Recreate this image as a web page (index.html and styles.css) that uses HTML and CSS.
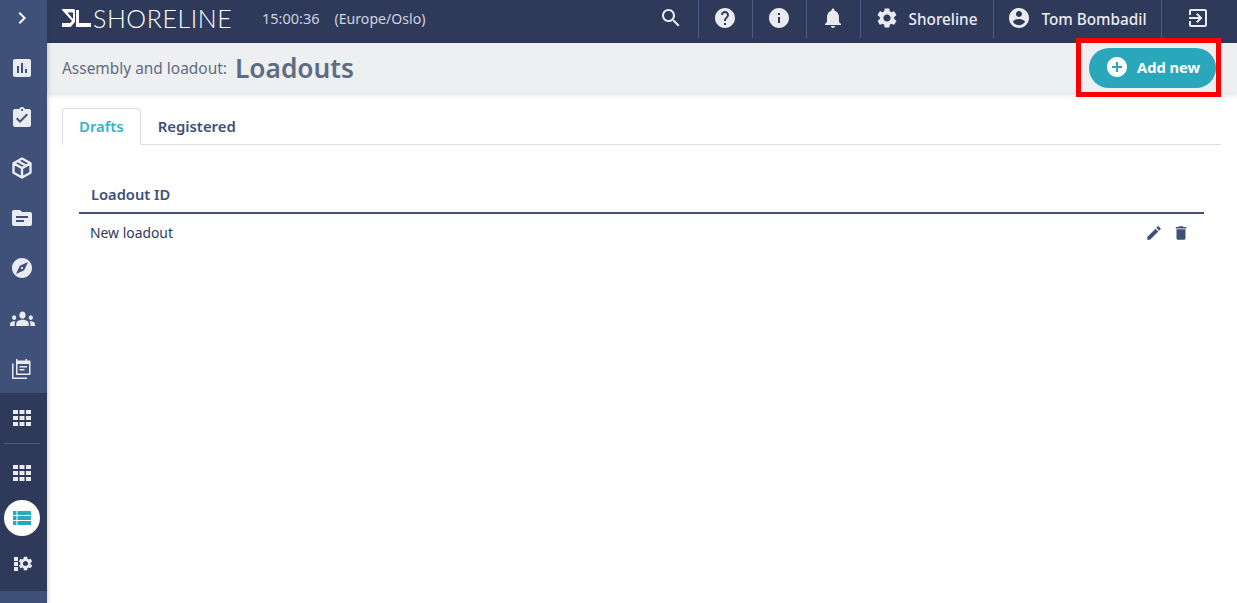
FILE: index.html
```html
<!DOCTYPE html>
<html lang="en">
<head>
    <meta charset="utf-8">
    <meta name="viewport" content="width=device-width, initial-scale=1.0">
    <title>Loadouts</title>
    <link rel="stylesheet" href="styles.css">
</head>
<body>
    <svg class="sprite" aria-hidden="true">
        <symbol id="i-chevron" viewBox="0 0 24 24"><path d="M10 6L8.59 7.41 13.17 12l-4.58 4.59L10 18l6-6z"/></symbol>
        <symbol id="i-chart" viewBox="0 0 24 24"><path d="M19 3H5c-1.1 0-2 .9-2 2v14c0 1.1.9 2 2 2h14c1.1 0 2-.9 2-2V5c0-1.1-.9-2-2-2zM9 17H7v-7h2v7zm4 0h-2V7h2v10zm4 0h-2v-4h2v4z"/></symbol>
        <symbol id="i-task" viewBox="0 0 24 24"><path d="M19 3h-4.18C14.4 1.84 13.3 1 12 1c-1.3 0-2.4.84-2.82 2H5c-1.1 0-2 .9-2 2v14c0 1.1.9 2 2 2h14c1.1 0 2-.9 2-2V5c0-1.1-.9-2-2-2zm-7 0c.55 0 1 .45 1 1s-.45 1-1 1-1-.45-1-1 .45-1 1-1zm-2 14l-4-4 1.41-1.41L10 14.17l6.59-6.59L18 9l-8 8z"/></symbol>
        <symbol id="i-cube" viewBox="0 0 24 24"><path fill="none" stroke="currentColor" stroke-width="2.400" stroke-linejoin="round" d="M12 2.500l8.500 4.800v9.400L12 21.500l-8.500-4.800V7.300zM3.800 7.400l8.200 4.700 8.200-4.700M12 12.100v9.200M7.800 5l8.300 4.800"/></symbol>
        <symbol id="i-folder" viewBox="0 0 24 24"><path d="M20 6h-8l-2-2H4c-1.100 0-1.990.9-1.990 2L2 18c0 1.100.9 2 2 2h16c1.100 0 2-.9 2-2V8c0-1.100-.9-2-2-2zm-6 10H6v-2h8v2zm4-4H6v-2h12v2z"/></symbol>
        <symbol id="i-compass" viewBox="0 0 24 24"><path d="M12 10.900c-.61 0-1.100.49-1.100 1.100s.49 1.100 1.100 1.100c.61 0 1.100-.49 1.100-1.100s-.49-1.100-1.100-1.100zM12 2C6.480 2 2 6.480 2 12s4.480 10 10 10 10-4.480 10-10S17.520 2 12 2zm2.190 12.190L6 18l3.810-8.190L18 6l-3.810 8.190z"/></symbol>
        <symbol id="i-people" viewBox="0 5.500 24 12.500" preserveAspectRatio="none"><path d="M12 12.750c1.630 0 3.070.39 4.240.9 1.080.48 1.760 1.560 1.760 2.730V18H6v-1.610c0-1.180.68-2.260 1.760-2.730 1.170-.52 2.610-.91 4.240-.91zM4 13c1.100 0 2-.9 2-2s-.9-2-2-2-2 .9-2 2 .9 2 2 2zm1.130 1.100c-.37-.06-.74-.1-1.130-.1-.99 0-1.930.21-2.780.58C.48 14.900 0 15.620 0 16.430V18h4.500v-1.610c0-.83.23-1.610.63-2.290zM20 13c1.100 0 2-.9 2-2s-.9-2-2-2-2 .9-2 2 .9 2 2 2zm4 3.430c0-.81-.48-1.530-1.220-1.850-.85-.37-1.790-.58-2.780-.58-.39 0-.76.04-1.130.1.4.68.63 1.460.63 2.290V18H24v-1.570zM12 6c1.660 0 3 1.340 3 3s-1.340 3-3 3-3-1.340-3-3 1.340-3 3-3z"/></symbol>
        <symbol id="i-log" viewBox="0 0 24 24"><path d="M6 2h1.500v1.500h8V2H17v1.500h2.500c.6 0 1 .4 1 1V17c0 .6-.4 1-1 1H7c-.6 0-1-.4-1-1zm1.500 5v9.500h11.500V7zM9.500 9h7.500v1.500H9.500zm0 3h5v1.500h-5zM2 6.500h1.500V20.500H17V22H3c-.6 0-1-.4-1-1z"/></symbol>
        <symbol id="i-apps" viewBox="0 0 18 16"><path d="M0 0h5v4H0zM6.500 0h5v4h-5zM13 0h5v4h-5zM0 6h5v4H0zM6.500 6h5v4h-5zM13 6h5v4h-5zM0 12h5v4H0zM6.500 12h5v4h-5zM13 12h5v4h-5z"/></symbol>
        <symbol id="i-list" viewBox="0 0 18 14"><path d="M0 0h3.500v4H0zM4.500 0H18v4H4.500zM0 5h3.500v4H0zM4.500 5H18v4H4.500zM0 10h3.500v4H0zM4.500 10H18v4H4.500z"/></symbol>
        <symbol id="i-gear" viewBox="0 0 24 24"><path d="M19.140 12.940c.04-.3.06-.61.06-.94 0-.32-.02-.64-.07-.94l2.030-1.580c.18-.14.23-.41.12-.61l-1.920-3.320c-.12-.22-.37-.29-.59-.22l-2.390.96c-.5-.38-1.030-.7-1.620-.94l-.36-2.540c-.04-.24-.24-.41-.48-.41h-3.840c-.24 0-.43.17-.47.41l-.36 2.540c-.59.24-1.130.57-1.620.94l-2.390-.96c-.22-.08-.47 0-.59.22L2.740 8.870c-.12.21-.08.47.12.61l2.030 1.580c-.05.3-.09.63-.09.94s.02.64.07.94l-2.030 1.580c-.18.14-.23.41-.12.61l1.920 3.320c.12.22.37.29.59.22l2.390-.96c.5.38 1.030.7 1.620.94l.36 2.540c.05.24.24.41.48.41h3.840c.24 0 .44-.17.47-.41l.36-2.540c.59-.24 1.130-.56 1.620-.94l2.390.96c.22.08.47 0 .59-.22l1.920-3.320c.12-.22.07-.47-.12-.61l-2.010-1.580zM12 15.600c-1.980 0-3.600-1.620-3.600-3.600s1.620-3.600 3.600-3.600 3.600 1.620 3.600 3.600-1.620 3.600-3.600 3.600z"/></symbol>
        <symbol id="i-search" viewBox="0 0 24 24"><path d="M15.500 14h-.79l-.28-.27C15.410 12.590 16 11.110 16 9.500 16 5.910 13.090 3 9.500 3S3 5.910 3 9.500 5.910 16 9.500 16c1.610 0 3.090-.59 4.230-1.570l.27.28v.79l5 4.990L20.490 19l-4.990-5zm-6 0C7.010 14 5 11.990 5 9.500S7.010 5 9.500 5 14 7.010 14 9.500 11.990 14 9.500 14z"/></symbol>
        <symbol id="i-help" viewBox="0 0 24 24"><path d="M12 2C6.480 2 2 6.480 2 12s4.480 10 10 10 10-4.480 10-10S17.520 2 12 2zm1 17h-2v-2h2v2zm2.070-7.750l-.9.92C13.450 12.900 13 13.500 13 15h-2v-.5c0-1.100.45-2.100 1.170-2.830l1.240-1.260c.37-.36.59-.86.59-1.410 0-1.100-.9-2-2-2s-2 .9-2 2H8c0-2.210 1.790-4 4-4s4 1.790 4 4c0 .88-.36 1.680-.93 2.250z"/></symbol>
        <symbol id="i-info" viewBox="0 0 24 24"><path d="M12 2C6.480 2 2 6.480 2 12s4.480 10 10 10 10-4.480 10-10S17.520 2 12 2zm1 15h-2v-6h2v6zm0-8h-2V7h2v2z"/></symbol>
        <symbol id="i-bell" viewBox="0 0 24 24"><path d="M12 22c1.100 0 2-.9 2-2h-4c0 1.100.89 2 2 2zm6-6v-5c0-3.070-1.640-5.640-4.500-6.320V4c0-.83-.67-1.500-1.500-1.500s-1.500.67-1.500 1.500v.68C7.630 5.360 6 7.920 6 11v5l-2 2v1h16v-1l-2-2z"/></symbol>
        <symbol id="i-user" viewBox="0 0 24 24"><path d="M12 2C6.480 2 2 6.480 2 12s4.480 10 10 10 10-4.480 10-10S17.520 2 12 2zm0 3c1.660 0 3 1.340 3 3s-1.340 3-3 3-3-1.340-3-3 1.340-3 3-3zm0 14.200c-2.500 0-4.710-1.280-6-3.220.03-1.990 4-3.080 6-3.080 1.990 0 5.970 1.090 6 3.080-1.290 1.940-3.500 3.220-6 3.220z"/></symbol>
        <symbol id="i-exit" viewBox="0 0 24 24"><path d="M10.090 15.590L11.500 17l5-5-5-5-1.410 1.410L12.670 11H3v2h9.670l-2.580 2.590zM19 3H5c-1.110 0-2 .9-2 2v4h2V5h14v14H5v-4H3v4c0 1.100.89 2 2 2h14c1.100 0 2-.9 2-2V5c0-1.100-.9-2-2-2z"/></symbol>
        <symbol id="i-add" viewBox="0 0 24 24"><path d="M12 2C6.480 2 2 6.480 2 12s4.480 10 10 10 10-4.480 10-10S17.520 2 12 2zm5 11h-4v4h-2v-4H7v-2h4V7h2v4h4v2z"/></symbol>
        <symbol id="i-edit" viewBox="0 0 24 24"><path d="M3 17.250V21h3.750L17.810 9.940l-3.750-3.750L3 17.250zM20.710 7.040c.39-.39.39-1.020 0-1.410l-2.340-2.340c-.39-.39-1.020-.39-1.410 0l-1.830 1.830 3.750 3.750 1.830-1.830z"/></symbol>
        <symbol id="i-delete" viewBox="0 0 24 24"><path d="M6 19c0 1.100.9 2 2 2h8c1.100 0 2-.9 2-2V7H6v12zM19 4h-3.500l-1-1h-5l-1 1H5v2h14V4z"/></symbol>
    </svg>

    <aside class="sidebar">
        <a class="side-toggle"><svg class="icon-toggle"><use href="#i-chevron"/></svg></a>
        <nav class="side-main">
            <a class="side-item"><svg class="icon-side"><use href="#i-chart"/></svg></a>
            <a class="side-item"><svg class="icon-side"><use href="#i-task"/></svg></a>
            <a class="side-item"><svg class="icon-side"><use href="#i-cube"/></svg></a>
            <a class="side-item"><svg class="icon-side"><use href="#i-folder"/></svg></a>
            <a class="side-item"><svg class="icon-side"><use href="#i-compass"/></svg></a>
            <a class="side-item"><svg class="icon-people"><use href="#i-people"/></svg></a>
            <a class="side-item"><svg class="icon-side"><use href="#i-log"/></svg></a>
        </nav>
        <nav class="side-sub">
            <a class="side-item"><svg class="icon-apps"><use href="#i-apps"/></svg></a>
            <div class="side-rule"></div>
            <a class="side-apps"><svg class="icon-apps"><use href="#i-apps"/></svg></a>
            <a class="side-current"><svg class="icon-list"><use href="#i-list"/></svg></a>
            <a class="side-settings">
                <svg class="icon-dots" viewBox="0 0 4 14"><path d="M0 0h4v4H0zM0 5h4v4H0zM0 10h4v4H0z"/></svg>
                <svg class="icon-small-gear"><use href="#i-gear"/></svg>
            </a>
        </nav>
    </aside>

    <div class="page">
        <header class="topbar">
            <div class="brand">
                <svg class="logo" viewBox="0 0 29 18"><path fill-rule="evenodd" d="M0 0H12L13 1V13L8.500 18H0V14H8L10 12 0 1zM5.500 3.500H11V10zM14 1h3v13h12v4H14z"/></svg>
                <span class="brand-name">SHORELINE</span>
            </div>
            <span class="clock">15:00:36</span>
            <span class="zone">(Europe/Oslo)</span>
            <div class="top-actions">
                <a class="top-item top-search"><svg class="icon-top"><use href="#i-search"/></svg></a>
                <a class="top-item top-square"><svg class="icon-top"><use href="#i-help"/></svg></a>
                <a class="top-item top-square"><svg class="icon-top"><use href="#i-info"/></svg></a>
                <a class="top-item top-square"><svg class="icon-top"><use href="#i-bell"/></svg></a>
                <a class="top-item top-org"><svg class="icon-top"><use href="#i-gear"/></svg>Shoreline</a>
                <a class="top-item top-user"><svg class="icon-top"><use href="#i-user"/></svg>Tom Bombadil</a>
                <a class="top-item top-exit"><svg class="icon-top"><use href="#i-exit"/></svg></a>
            </div>
        </header>

        <div class="titlebar">
            <span class="crumb">Assembly and loadout:</span>
            <h1>Loadouts</h1>
            <div class="add-wrap">
                <button class="add-btn"><svg class="icon-add"><use href="#i-add"/></svg>Add new</button>
            </div>
        </div>

        <main class="content">
            <div class="tabs">
                <a class="tab tab-active">Drafts</a>
                <a class="tab">Registered</a>
            </div>
            <table class="grid">
                <thead>
                    <tr><th>Loadout ID</th><th></th></tr>
                </thead>
                <tbody>
                    <tr>
                        <td>New loadout</td>
                        <td class="row-actions">
                            <svg class="icon-row"><use href="#i-edit"/></svg>
                            <svg class="icon-row"><use href="#i-delete"/></svg>
                        </td>
                    </tr>
                </tbody>
            </table>
        </main>
    </div>
</body>
</html>
```

FILE: styles.css
```css
* {
    box-sizing: border-box;
}
html, body {
    height: 100%;
}
body {
    margin: 0;
    display: flex;
    overflow: hidden;
    font-family: "Noto Sans", "Open Sans", Arial, sans-serif;
    color: #2f3a5a;
    background-color: #fff;
}
svg {
    display: block;
    fill: currentColor;
}
.sprite {
    display: none;
}

/* sidebar */
.sidebar {
    width: 47px;
    flex: none;
    display: flex;
    flex-direction: column;
    color: #e9ebf0;
    background-color: #3f5079;
    box-shadow: 1px 0 4px rgba(47, 58, 90, 0.25);
    z-index: 2;
}
.side-toggle {
    height: 35px;
    padding-right: 3px;
    display: flex;
    align-items: center;
    justify-content: center;
    color: #fff;
}
.icon-toggle {
    width: 24px;
    height: 24px;
}
.side-main {
    padding-top: 7.500px;
    height: 358px;
}
.side-item {
    height: 50.200px;
    padding-right: 3px;
    display: flex;
    align-items: center;
    justify-content: center;
}
.icon-side {
    width: 24px;
    height: 24px;
}
.icon-people {
    width: 25px;
    height: 15px;
}
.side-sub {
    height: 198px;
    background-color: #2f3a5a;
}
.icon-apps {
    width: 18px;
    height: 16px;
}
.side-rule {
    height: 1px;
    width: 36px;
    margin-left: 4px;
    background-color: #4d5c84;
}
.side-apps {
    height: 56px;
    padding: 2px 3px 0 0;
    display: flex;
    align-items: center;
    justify-content: center;
}
.side-current {
    width: 36px;
    height: 36px;
    margin-left: 4px;
    border-radius: 50%;
    display: flex;
    align-items: center;
    justify-content: center;
    color: #2aa7bb;
    background-color: #fff;
}
.icon-list {
    width: 18px;
    height: 14px;
}
.side-settings {
    height: 55px;
    padding-left: 14px;
    display: flex;
    align-items: center;
}
.icon-dots {
    width: 4px;
    height: 14px;
}
.icon-small-gear {
    width: 17px;
    height: 17px;
    margin-left: -1px;
}

/* top bar */
.page {
    flex: 1;
    min-width: 0;
    display: flex;
    flex-direction: column;
}
.topbar {
    height: 43px;
    flex: none;
    display: flex;
    align-items: flex-start;
    color: #e9ebf0;
    background-color: #2f3a5a;
}
.brand {
    display: flex;
    align-items: center;
    height: 36px;
    margin-left: 15px;
    width: 200px;
}
.logo {
    width: 29px;
    height: 18px;
    color: #fff;
}
.brand-name {
    margin-left: 2px;
    font-family: "Lato", sans-serif;
    font-weight: 300;
    font-size: 25px;
    letter-spacing: 0.55px;
    color: #fff;
}
.clock {
    line-height: 37px;
    font-size: 14.500px;
    color: #cfd3de;
}
.zone {
    line-height: 37px;
    margin-left: 15px;
    font-size: 14.100px;
    color: #cfd3de;
}
.top-actions {
    margin-left: auto;
    display: flex;
}
.top-item {
    height: 38px;
    padding-right: 2px;
    display: flex;
    align-items: center;
    justify-content: center;
    border-left: 1px solid #4d5c84;
    font-size: 15.300px;
    font-weight: 500;
    color: #e9ebf0;
}
.icon-top {
    width: 24px;
    height: 24px;
    margin-top: -2px;
}
.top-search {
    width: 54px;
    border-left: 0;
    padding-left: 1px;
}
.top-square {
    width: 54px;
}
.top-org {
    width: 133px;
    gap: 10px;
}
.top-user {
    width: 168px;
    padding-right: 1px;
    gap: 10px;
}
.top-exit {
    width: 76px;
    padding-right: 4px;
}

/* title bar */
.titlebar {
    height: 50px;
    flex: none;
    display: flex;
    align-items: center;
    padding: 0 21px 0 15px;
    background-color: #eeeff1;
    box-shadow: 0 2px 5px rgba(0, 0, 0, 0.12);
}
.crumb {
    font-size: 15.450px;
    color: #5f6b84;
}
h1 {
    margin: 0 0 0 8px;
    font-size: 26.300px;
    font-weight: 600;
    color: #5f6b84;
}
.add-wrap {
    position: relative;
    margin-left: auto;
}
.add-wrap::after {
    content: "";
    position: absolute;
    left: -13px;
    right: -5px;
    top: -10px;
    bottom: -9px;
    border: 5px solid #f00;
}
.add-btn {
    width: 127px;
    height: 40px;
    display: flex;
    align-items: center;
    gap: 8px;
    padding: 0 0 2px 16px;
    border: 0;
    border-radius: 20px;
    font-family: inherit;
    font-size: 14.700px;
    font-weight: 700;
    color: #fff;
    background-color: #2aa7bb;
}
.icon-add {
    width: 24px;
    height: 24px;
}

/* tabs and table */
.content {
    padding: 15px 16px 0 15px;
}
.tabs {
    height: 37px;
    display: flex;
    border-bottom: 1px solid #dcdde0;
}
.tab {
    height: 37px;
    padding: 0 16px 0 17px;
    line-height: 36px;
    font-size: 14.900px;
    font-weight: 600;
    color: #3f5079;
}
.tab-active {
    padding: 0 16px 0 16px;
    line-height: 35px;
    border: 1px solid #dcdde0;
    border-bottom-color: #fff;
    border-radius: 4px 4px 0 0;
    color: #33b4cb;
}
.grid {
    width: 1125px;
    margin: 31px 0 0 17px;
    border-collapse: collapse;
}
.grid th {
    height: 37px;
    padding: 0 12px;
    text-align: left;
    font-size: 14.700px;
    font-weight: 600;
    color: #3f5079;
    border-bottom: 2px solid #3f5079;
}
.grid td {
    height: 39px;
    padding: 0 11px 2px;
    font-size: 13.900px;
    color: #2f3a5a;
}
.grid .row-actions {
    width: 90px;
    padding: 0 14px 2px 0;
    color: #3f5079;
}
.row-actions {
    text-align: right;
}
.icon-row {
    display: inline-block;
    width: 18px;
    height: 18px;
    margin-left: 5px;
    vertical-align: middle;
}
```
